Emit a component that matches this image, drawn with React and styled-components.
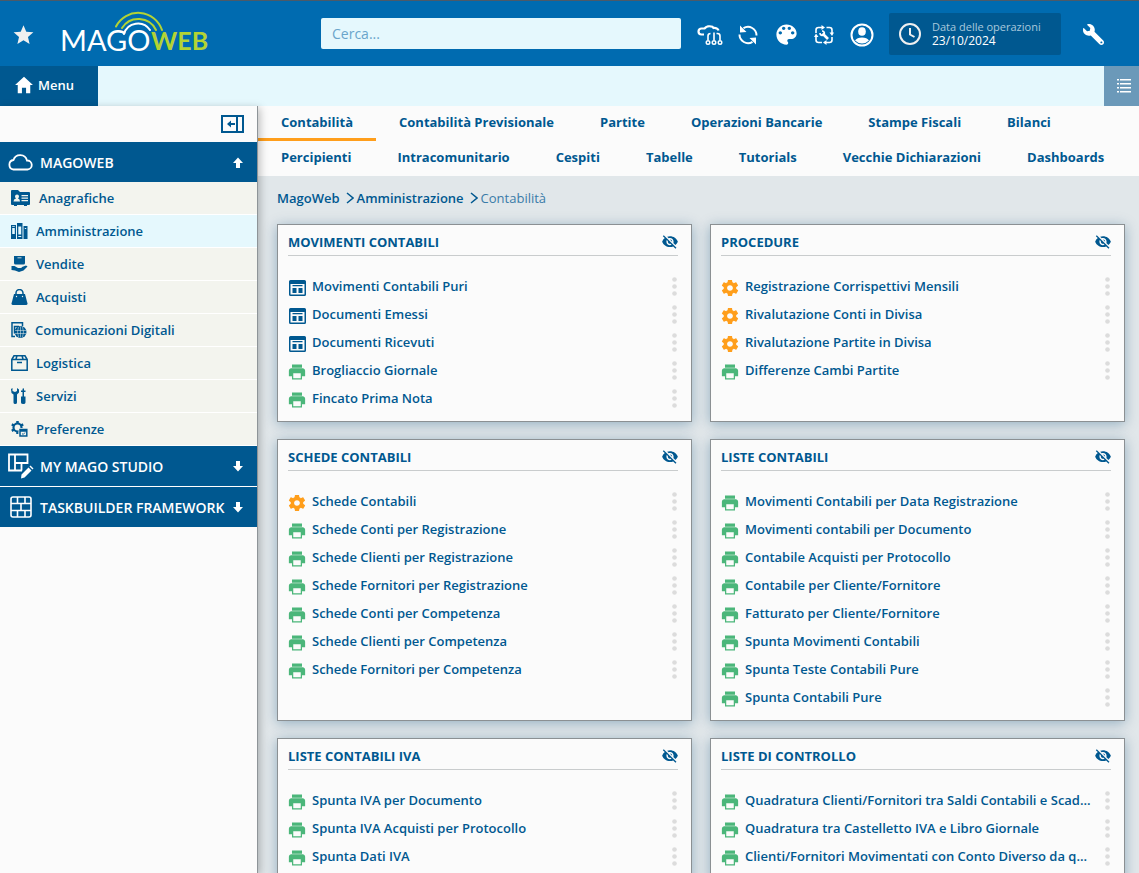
import React, { useState } from 'react'
import styled, { createGlobalStyle } from 'styled-components'
import { IoMdPrint, IoMdSettings, IoMdHome, IoMdStar, IoMdColorPalette, IoMdEyeOff } from 'react-icons/io'
import { FaWrench } from 'react-icons/fa'

const colors = {
    primary: '#006bb0',
    dark: '#005890',
    light: '#e5f8fd',
    surface: '#fbfbfb',
    item: '#f3f4ee',
    page: '#e1e7ea',
    green: '#4bb67a',
    orange: '#ff9e1b',
}

const tabs = [
    'Contabilità', 'Contabilità Previsionale', 'Partite', 'Operazioni Bancarie', 'Stampe Fiscali', 'Bilanci',
    'Percipienti', 'Intracomunitario', 'Cespiti', 'Tabelle', 'Tutorials', 'Vecchie Dichiarazioni', 'Dashboards',
]

const cards = [
    {
        title: 'MOVIMENTI CONTABILI',
        items: [
            ['doc', 'Movimenti Contabili Puri'],
            ['doc', 'Documenti Emessi'],
            ['doc', 'Documenti Ricevuti'],
            ['print', 'Brogliaccio Giornale'],
            ['print', 'Fincato Prima Nota'],
        ],
    },
    {
        title: 'PROCEDURE',
        items: [
            ['gear', 'Registrazione Corrispettivi Mensili'],
            ['gear', 'Rivalutazione Conti in Divisa'],
            ['gear', 'Rivalutazione Partite in Divisa'],
            ['print', 'Differenze Cambi Partite'],
        ],
    },
    {
        title: 'SCHEDE CONTABILI',
        items: [
            ['gear', 'Schede Contabili'],
            ['print', 'Schede Conti per Registrazione'],
            ['print', 'Schede Clienti per Registrazione'],
            ['print', 'Schede Fornitori per Registrazione'],
            ['print', 'Schede Conti per Competenza'],
            ['print', 'Schede Clienti per Competenza'],
            ['print', 'Schede Fornitori per Competenza'],
        ],
    },
    {
        title: 'LISTE CONTABILI',
        items: [
            ['print', 'Movimenti Contabili per Data Registrazione'],
            ['print', 'Movimenti contabili per Documento'],
            ['print', 'Contabile Acquisti per Protocollo'],
            ['print', 'Contabile per Cliente/Fornitore'],
            ['print', 'Fatturato per Cliente/Fornitore'],
            ['print', 'Spunta Movimenti Contabili'],
            ['print', 'Spunta Teste Contabili Pure'],
            ['print', 'Spunta Contabili Pure'],
        ],
    },
    {
        title: 'LISTE CONTABILI IVA',
        items: [
            ['print', 'Spunta IVA per Documento'],
            ['print', 'Spunta IVA Acquisti per Protocollo'],
            ['print', 'Spunta Dati IVA'],
        ],
    },
    {
        title: 'LISTE DI CONTROLLO',
        items: [
            ['print', 'Quadratura Clienti/Fornitori tra Saldi Contabili e Scad...'],
            ['print', 'Quadratura tra Castelletto IVA e Libro Giornale'],
            ['print', 'Clienti/Fornitori Movimentati con Conto Diverso da q...'],
        ],
    },
]

const Logo = () => (
    <svg width='150' height='46' viewBox='0 0 150 46' role='img' aria-label='MagoWeb'>
        <g fill='none' strokeLinecap='round' strokeWidth='2'>
            <path d='M56 15.500 A25 25 0 0 1 102 19' stroke='#b3d334' />
            <path d='M62 17 A19.500 19.500 0 0 1 96 19' stroke='#b3d334' />
            <path d='M64 23 A14.500 14.500 0 0 1 90 19' stroke='#fff' />
        </g>
        <text x='0' y='40' fontFamily='Lato, sans-serif' fontSize='29' fontWeight='400' fill='#fff'>MAGO</text>
        <text x='91' y='39' fontFamily='Lato, sans-serif' fontSize='25' fontWeight='700' fill='#b3d334'>WEB</text>
    </svg>
)

const CloudNetIcon = () => (
    <svg width='26' height='22' viewBox='0 0 26 22' fill='none' stroke='#fff' strokeWidth='2.200'>
        <path d='M7 10.500 H4.500 A3 3 0 0 1 4.500 4.500 H7.500 A6 4.500 0 0 1 15.500 2.800 L16.500 4 A4 3 0 0 1 21.500 6.500' />
        <path d='M11 16 V12 Q11 9.500 13.500 9.500 M17 16 V8.500 M19.500 9.500 H20.500 Q23 9.500 23 12 V16' strokeWidth='1.600' />
        <circle cx='11' cy='18.500' r='1.800' strokeWidth='1.400' />
        <circle cx='17' cy='18.500' r='1.800' strokeWidth='1.400' />
        <circle cx='23' cy='18.500' r='1.800' strokeWidth='1.400' />
    </svg>
)

const SyncIcon = () => (
    <svg width='20' height='20' viewBox='0 0 20 20' fill='none' stroke='#fff' strokeWidth='2'>
        <path d='M5.500 3.200 A8.500 8.500 0 0 1 18.500 10.500 M1.500 9.500 A8.500 8.500 0 0 0 14.500 16.800' />
        <path d='M2 .5 L8.500 7 L2 7.500Z M18 19.500 L11.500 13 L18 12.500Z' fill='#fff' stroke='none' />
    </svg>
)

const MaintenanceIcon = () => (
    <svg width='20' height='20' viewBox='0 0 20 20' fill='none' stroke='#fff' strokeWidth='1.600'>
        <path d='M2 8 V5 Q2 2.500 4.500 2.500 H9 M12.500 2.500 H15.500 Q18 2.500 18 5 V8 M18 12 V15 Q18 17.500 15.500 17.500 H12 M8 17.500 H4.500 Q2 17.500 2 15 V11' />
        <path d='M7.500 0 L11 2.500 L7.500 5Z M20 7.500 L18 11 L15.500 7.500Z M12.500 15 L9 17.500 L12.500 20Z M0 12 L2 8.500 L4.500 12Z' fill='#fff' stroke='none' />
        <path d='M8.500 8.500 L14 14' strokeWidth='2.600' />
        <path d='M8 6 A2.200 2.200 0 1 1 6 8' strokeWidth='1.600' />
    </svg>
)

const UserIcon = () => (
    <svg width='24' height='24' viewBox='0 0 24 24' fill='#fff'>
        <circle cx='12' cy='12' r='10.500' fill='none' stroke='#fff' strokeWidth='2' />
        <ellipse cx='12' cy='8.500' rx='3.800' ry='4.300' />
        <path d='M5 17.500 Q7 14.500 12 14.500 Q17 14.500 19 17.500 Q16 20.500 12 20.500 Q8 20.500 5 17.500Z' />
    </svg>
)

const ClockIcon = () => (
    <svg width='24' height='24' viewBox='0 0 24 24' fill='none' stroke='#f0f0f0' strokeWidth='2'>
        <circle cx='12' cy='12' r='10' />
        <path d='M12 6 V12.500 L16.500 15' />
    </svg>
)

const ListIcon = () => (
    <svg width='14' height='16' viewBox='0 0 14 16' fill='#fff'>
        <path d='M0 1h2v1.500H0z M3 1h11v1.500H3z M0 5h2v1.500H0z M3 5h11v1.500H3z M0 9h2v1.500H0z M3 9h11v1.500H3z M0 13h2v1.500H0z M3 13h11v1.500H3z' />
    </svg>
)

const CollapseIcon = () => (
    <svg width='23' height='18' viewBox='0 0 23 18' fill='none' stroke={colors.dark} strokeWidth='2'>
        <path d='M1 1 H22 V17 H1Z M16 1 V17' />
        <path d='M14 9 H8' />
        <path d='M6 9 L10 5.500 V12.500Z' fill={colors.dark} stroke='none' />
    </svg>
)

const ArrowIcon = ({ down }) => (
    <svg width='10' height='11' viewBox='0 0 10 11' fill='#fff'>
        {down ? <path d='M3 0 H7 V5 H10 L5 10.500 L0 5 H3Z' /> : <path d='M3 11 H7 V6 H10 L5 .5 L0 6 H3Z' />}
    </svg>
)

const ChevronIcon = () => (
    <svg width='8' height='12' viewBox='0 0 8 12' fill='none' stroke={colors.dark} strokeWidth='1.500'>
        <path d='M1 1 L7 6 L1 11' />
    </svg>
)

const DocIcon = () => (
    <svg width='17' height='16' viewBox='0 0 17 16' fill={colors.dark}>
        <path fillRule='evenodd' d='M1.500 0 H15.500 Q17 0 17 1.500 V14.500 Q17 16 15.500 16 H1.500 Q0 16 0 14.500 V1.500 Q0 0 1.500 0Z M1.500 4 V14.500 H15.500 V4Z' />
        <path d='M3.500 5h10v1.200h-10z M3.500 8h4v5h-4z M9.500 8h4v5h-4z' />
    </svg>
)

const MoreIcon = () => (
    <svg width='5' height='19' viewBox='0 0 5 19' fill='#dcdcdc'>
        <circle cx='2.500' cy='2.500' r='2.300' />
        <circle cx='2.500' cy='9.500' r='2.300' />
        <circle cx='2.500' cy='16.500' r='2.300' />
    </svg>
)

const sectionIcons = {
    cloud: (
        <svg width='26' height='18' viewBox='0 0 26 18' fill='none' stroke='#fff' strokeWidth='1.800'>
            <path d='M5.500 16.500 H19.500 A4.500 4.500 0 0 0 19 7.500 A7 7 0 0 0 5.500 7 A4.800 4.800 0 0 0 5.500 16.500Z' />
        </svg>
    ),
    studio: (
        <svg width='26' height='26' viewBox='0 0 26 26' fill='none' stroke='#fff' strokeWidth='1.800'>
            <path d='M14 17.500 H1 V1.500 H19.500 V11 M7 1.500 V17.500 M7 10 H19.500 M13.500 10 V17.500' />
            <path d='M13 25.500 L13.500 21.500 L20.500 14.500 L23.500 17.500 L16.500 24.500Z M21.500 13.500 L22.500 12.500 L25.500 15.500 L24.500 16.500Z' fill='#fff' stroke='none' />
        </svg>
    ),
    wall: (
        <svg width='22' height='22' viewBox='0 0 22 22' fill='none' stroke='#fff' strokeWidth='1.600'>
            <rect x='1' y='1' width='20' height='20' rx='2' />
            <path d='M1 7.500 H21 M1 14.500 H21 M7.500 1 V7.500 M15 1 V7.500 M11 7.500 V14.500 M7.500 14.500 V21 M15 14.500 V21' />
        </svg>
    ),
}

const menuIcons = {
    contacts: (
        <svg width='20' height='16' viewBox='0 0 20 16' fill={colors.dark}>
            <path fillRule='evenodd' d='M1 0 H7 L9 2 H18 Q19 2 19 3 V14 Q19 15 18 15 H16 V16 H13 V15 H6 V16 H3 V15 H1 Q0 15 0 14 V1 Q0 0 1 0Z M10.500 5 V6.200 H17 V5Z M10.500 7.500 V8.700 H17 V7.500Z M10.500 10 V11.200 H17 V10Z M2.500 11.500 H9 Q9 9 7 8.500 Q8 7.500 8 6.500 Q8 4.500 6 4.500 Q4 4.500 4 6.500 Q4 7.500 5 8.500 Q2.500 9 2.500 11.500Z' />
        </svg>
    ),
    binders: (
        <svg width='17' height='16' viewBox='0 0 17 16' fill={colors.dark}>
            <path fillRule='evenodd' d='M0 2h5v14H0z M1.200 5v6h2.600V5z M6 0h5.500v16H6z M7.300 3.500v8h2.900v-8z M12.500 3h4v13h-4z M13.800 5v1h1.400V5z M1.200 3.200v.8h2.600v-.8z M7.300 13v1h2.900v-1z' />
        </svg>
    ),
    hand: (
        <svg width='17' height='16' viewBox='0 0 17 16' fill={colors.dark}>
            <path d='M3 0 H14 V7 Q14 8.500 12.500 8.500 H4.500 Q3 8.500 3 7Z' />
            <path d='M.5 10 H3.500 L7 12 H9.500 Q11 12 11 11 L15 9.500 L16.500 10.500 L12.500 14.500 L8 16 L4 14.500 L.5 14Z' />
            <path d='M6.500 1.800 H10.500' stroke='#f3f4ee' strokeWidth='.8' />
        </svg>
    ),
    bag: (
        <svg width='17' height='16' viewBox='0 0 17 16' fill={colors.dark}>
            <path d='M3 5 H14 L16.500 14.500 Q16.500 16 15 16 H2 Q.5 16 .5 14.500Z' />
            <path d='M5 6 V4 A3.500 3.500 0 0 1 12 4 V6' fill='none' stroke={colors.dark} strokeWidth='1.500' />
            <circle cx='5.500' cy='7.500' r='.7' fill='#f3f4ee' />
            <circle cx='11.500' cy='7.500' r='.7' fill='#f3f4ee' />
        </svg>
    ),
    globe: (
        <svg width='16' height='16' viewBox='0 0 16 16' fill='none' stroke={colors.dark} strokeWidth='1.500'>
            <path d='M4 14.500 H1 V.8 H11.500 V4 M3.500 11.500 V4.500 H8' />
            <circle cx='9.500' cy='10' r='6' fill={colors.dark} stroke='none' />
            <path d='M4 8.500 H15 M4 11.500 H15 M9.500 4.500 V15.500 M7.500 5 Q5.500 10 7.500 15 M11.500 5 Q13.500 10 11.500 15' stroke='#f3f4ee' strokeWidth='.500' />
        </svg>
    ),
    box: (
        <svg width='17' height='16' viewBox='0 0 17 16' fill='none' stroke={colors.dark} strokeWidth='1.500'>
            <path d='M.8 4.500 L3 .8 H14 L16.200 4.500 V15.200 H.8Z M.8 4.500 H16.200 M6 .8 L5 4 M11 .8 L12 4 M6 7.500 H11' />
        </svg>
    ),
    tools: (
        <svg width='17' height='16' viewBox='0 0 17 16' fill={colors.dark}>
            <path d='M0 1 L1.500 0 V3 L4 4 L6 3 V0 L8 1.500 V4.500 L6 6.500 V14.500 Q6 16 4.200 16 Q2.500 16 2.500 14.500 V6.500 L.5 5Z' />
            <path d='M11.500 1 L12.200 0 L13 1 V8.500 H14.500 V14.500 Q14.500 16 12.300 16 Q10 16 10 14.500 V8.500 H11.500Z' />
            <path d='M10 2.500 H14.500 V4 H10Z' />
        </svg>
    ),
    prefs: (
        <svg width='17' height='16' viewBox='0 0 17 16' fill='none' stroke={colors.dark}>
            <circle cx='6.500' cy='6.500' r='4' strokeWidth='2.200' />
            <path d='M6.500 0 V2.500 M6.500 11 V13 M.8 3.300 L3 4.500 M12.200 3.300 L10 4.500 M.8 9.800 L3 8.500' strokeWidth='2.500' />
            <rect x='7.500' y='7' width='9.500' height='9' fill='#f3f4ee' stroke='none' />
            <path d='M9 8.500 H15.800 V15 H9Z M9 10 H15.800' strokeWidth='1.500' />
            <path d='M11 12.500 L12.200 13.500 L14 11.500' strokeWidth='.9' />
        </svg>
    ),
}

const menuItems = [
    ['contacts', 'Anagrafiche'],
    ['binders', 'Amministrazione'],
    ['hand', 'Vendite'],
    ['bag', 'Acquisti'],
    ['globe', 'Comunicazioni Digitali'],
    ['box', 'Logistica'],
    ['tools', 'Servizi'],
    ['prefs', 'Preferenze'],
]

const itemIcons = {
    doc: <DocIcon />,
    print: <IoMdPrint size={20} color={colors.green} />,
    gear: <IoMdSettings size={20} color={colors.orange} />,
}

function App() {
    const [search, setSearch] = useState('')

    return (
        <>
            <GlobalStyle />
            <Page>
                <Header>
                    <IconButton $width={46} aria-label='Preferiti'><IoMdStar size={25} color='#f0f0f0' /></IconButton>
                    <Brand href='#'><Logo /></Brand>
                    <Search type='search' aria-label='Cerca' placeholder='Cerca...' value={search} onChange={(e) => setSearch(e.target.value)} />
                    <Actions>
                        <IconButton aria-label='Connessioni'><CloudNetIcon /></IconButton>
                        <IconButton aria-label='Aggiorna'><SyncIcon /></IconButton>
                        <IconButton aria-label='Tema'><IoMdColorPalette size={27} /></IconButton>
                        <IconButton aria-label='Manutenzione'><MaintenanceIcon /></IconButton>
                        <IconButton aria-label='Utente'><UserIcon /></IconButton>
                    </Actions>
                    <DateButton>
                        <ClockIcon />
                        <span>
                            <small>Data delle operazioni</small>
                            <b>23/10/2024</b>
                        </span>
                    </DateButton>
                    <IconButton $width={46} aria-label='Strumenti'><Wrench size={21} /></IconButton>
                </Header>
                <MenuBar>
                    <MenuTab><IoMdHome size={22} />Menu</MenuTab>
                    <ListButton aria-label='Elenco'><ListIcon /></ListButton>
                </MenuBar>
                <Body>
                    <Sidebar>
                        <SidebarTop>
                            <PlainButton aria-label='Comprimi'><CollapseIcon /></PlainButton>
                        </SidebarTop>
                        <Section>
                            <SectionIcon>{sectionIcons.cloud}</SectionIcon>
                            <span>MAGOWEB</span>
                            <ArrowIcon />
                        </Section>
                        {menuItems.map(([icon, label]) => (
                            <MenuItem key={label} href='#' $active={label === 'Amministrazione'}>
                                {menuIcons[icon]}
                                {label}
                            </MenuItem>
                        ))}
                        <Section>
                            <SectionIcon>{sectionIcons.studio}</SectionIcon>
                            <span>MY MAGO STUDIO</span>
                            <ArrowIcon down />
                        </Section>
                        <Section $divided>
                            <SectionIcon>{sectionIcons.wall}</SectionIcon>
                            <span>TASKBUILDER FRAMEWORK</span>
                            <ArrowIcon down />
                        </Section>
                    </Sidebar>
                    <Main>
                        <Tabs>
                            {tabs.map((tab) => (
                                <Tab key={tab} href='#' $active={tab === 'Contabilità'}>{tab}</Tab>
                            ))}
                        </Tabs>
                        <Breadcrumb>
                            <a href='#'>MagoWeb</a>
                            <ChevronIcon />
                            <a href='#'>Amministrazione</a>
                            <ChevronIcon />
                            <span>Contabilità</span>
                        </Breadcrumb>
                        <Cards>
                            {cards.map(({ title, items }) => (
                                <Card key={title}>
                                    <CardHeader>
                                        <h2>{title}</h2>
                                        <HideButton aria-label={'Nascondi ' + title}><IoMdEyeOff size={18} /></HideButton>
                                    </CardHeader>
                                    <ul>
                                        {items.map(([icon, label]) => (
                                            <CardItem key={label}>
                                                <ItemIcon>{itemIcons[icon]}</ItemIcon>
                                                <a href='#'>{label}</a>
                                                <PlainButton aria-label='Altro'><MoreIcon /></PlainButton>
                                            </CardItem>
                                        ))}
                                    </ul>
                                </Card>
                            ))}
                        </Cards>
                    </Main>
                </Body>
            </Page>
        </>
    )
}

export default App

const GlobalStyle = createGlobalStyle`
    *{
        box-sizing:border-box;
    }
    body{
        margin:0;
        font-family:'Open Sans', sans-serif;
        font-size:13px;
        color:${colors.dark};
        background:${colors.surface};
    }
    a{
        color:inherit;
        text-decoration:none;
    }
    button, input{
        font:inherit;
        color:inherit;
    }
    button{
        cursor:pointer;
    }
    svg{
        display:block;
        flex-shrink:0;
    }
`

const Page = styled.div`
    display:flex;
    flex-direction:column;
    height:100vh;
    overflow:hidden;
`

const Header = styled.header`
    display:flex;
    align-items:center;
    flex-shrink:0;
    height:66px;
    padding-right:23px;
    border-top:1px solid #4c5a68;
    background:${colors.primary};
    color:#fff;
`

const PlainButton = styled.button`
    display:flex;
    align-items:center;
    justify-content:center;
    flex-shrink:0;
    padding:0;
    border:0;
    background:none;
`

const IconButton = styled(PlainButton)`
    width:${(props) => props.$width || 38}px;
    height:40px;
    padding-top:2px;
`

const HideButton = styled(PlainButton)`
    width:16px;
`

const Brand = styled.a`
    margin-left:14px;
`

const Search = styled.input`
    flex:0 1 360px;
    min-width:0;
    height:31px;
    margin-left:auto;
    padding:0 11px;
    border:0;
    border-radius:2px;
    background:${colors.light};
    font-size:14px;
    &::placeholder{
        color:#6aa5cb;
        opacity:1;
    }
`

const Actions = styled.div`
    display:flex;
    margin:0 8px 0 10px;
`

const DateButton = styled.button`
    display:flex;
    align-items:center;
    gap:10px;
    width:172px;
    height:42px;
    margin-right:9px;
    padding:0 9px;
    border:0;
    border-radius:2px;
    background:${colors.dark};
    color:#fff;
    text-align:left;
    white-space:nowrap;
    small, b{
        display:block;
        font-weight:400;
        line-height:14px;
    }
    small{
        font-size:11px;
        color:#a9c8dc;
    }
    b{
        font-size:12px;
    }
`

const Wrench = styled(FaWrench)`
    transform:scaleX(-1);
`

const MenuBar = styled.div`
    display:flex;
    justify-content:space-between;
    flex-shrink:0;
    height:40px;
    background:${colors.light};
`

const MenuTab = styled.button`
    display:flex;
    align-items:center;
    gap:3px;
    width:98px;
    padding:0 13px 2px;
    border:0;
    background:${colors.dark};
    color:#fff;
    font-weight:600;
`

const ListButton = styled(PlainButton)`
    width:35px;
    padding-left:4px;
    background:#6b99b9;
`

const Body = styled.div`
    display:flex;
    flex:1;
    min-height:0;
`

const Sidebar = styled.nav`
    position:relative;
    z-index:1;
    flex:0 0 258px;
    border-right:1px solid #8e9498;
    background:${colors.surface};
    box-shadow:2px 2px 8px rgba(0, 0, 0, .25);
`

const SidebarTop = styled.div`
    display:flex;
    align-items:center;
    justify-content:flex-end;
    height:36px;
    padding-right:13px;
`

const Section = styled.button`
    display:flex;
    align-items:center;
    width:100%;
    height:${(props) => (props.$divided ? 41 : 40)}px;
    padding:0 14px 0 8px;
    border:0;
    border-top:${(props) => (props.$divided ? '1px solid #fff' : '0')};
    background:${colors.dark};
    color:#fff;
    font-size:14px;
    font-weight:600;
    text-align:left;
    span{
        flex:1;
        white-space:nowrap;
    }
`

const SectionIcon = styled.i`
    display:flex;
    justify-content:center;
    flex:0 0 26px;
    margin-right:6px;
`

const MenuItem = styled.a`
    display:flex;
    align-items:center;
    gap:8px;
    height:33px;
    padding-left:11px;
    border-bottom:1px solid #fff;
    background:${(props) => (props.$active ? colors.light : colors.item)};
    font-weight:600;
`

const Main = styled.main`
    flex:1;
    min-width:0;
    overflow-y:auto;
    scrollbar-width:none;
    background:${colors.page};
`

const Tabs = styled.nav`
    display:flex;
    flex-wrap:wrap;
    background:${colors.surface};
`

const Tab = styled.a`
    height:35px;
    padding:0 23px;
    border-bottom:3px solid ${(props) => (props.$active ? colors.orange : 'transparent')};
    line-height:32px;
    font-weight:700;
`

const Breadcrumb = styled.div`
    display:flex;
    align-items:center;
    height:48px;
    padding:0 19px 4px;
    a{
        font-weight:600;
    }
    span{
        color:#3a7ba8;
    }
    svg{
        margin:0 3px 0 6px;
    }
`

const Cards = styled.div`
    display:grid;
    grid-template-columns:repeat(2, minmax(0, 1fr));
    gap:17px 18px;
    padding:0 14px 18px 19px;
`

const Card = styled.section`
    padding:0 13px 9px 10px;
    border:1px solid #8b9093;
    background:${colors.surface};
    box-shadow:0 2px 12px rgba(0, 70, 115, .35);
    ul{
        margin:16px 0 0;
        padding:0;
        list-style:none;
    }
`

const CardHeader = styled.div`
    display:flex;
    align-items:center;
    justify-content:space-between;
    height:31px;
    padding-top:4px;
    border-bottom:1px solid #c9cccd;
    h2{
        margin:0;
        font-size:13px;
        font-weight:700;
    }
`

const CardItem = styled.li`
    display:flex;
    align-items:center;
    height:28px;
    padding-right:1px;
    font-weight:600;
    a{
        flex:1;
        min-width:0;
        overflow:hidden;
        white-space:nowrap;
        text-overflow:ellipsis;
    }
`

const ItemIcon = styled.span`
    display:flex;
    justify-content:center;
    flex:0 0 18px;
    min-width:0;
    margin-right:6px;
    padding-top:3px;
`
